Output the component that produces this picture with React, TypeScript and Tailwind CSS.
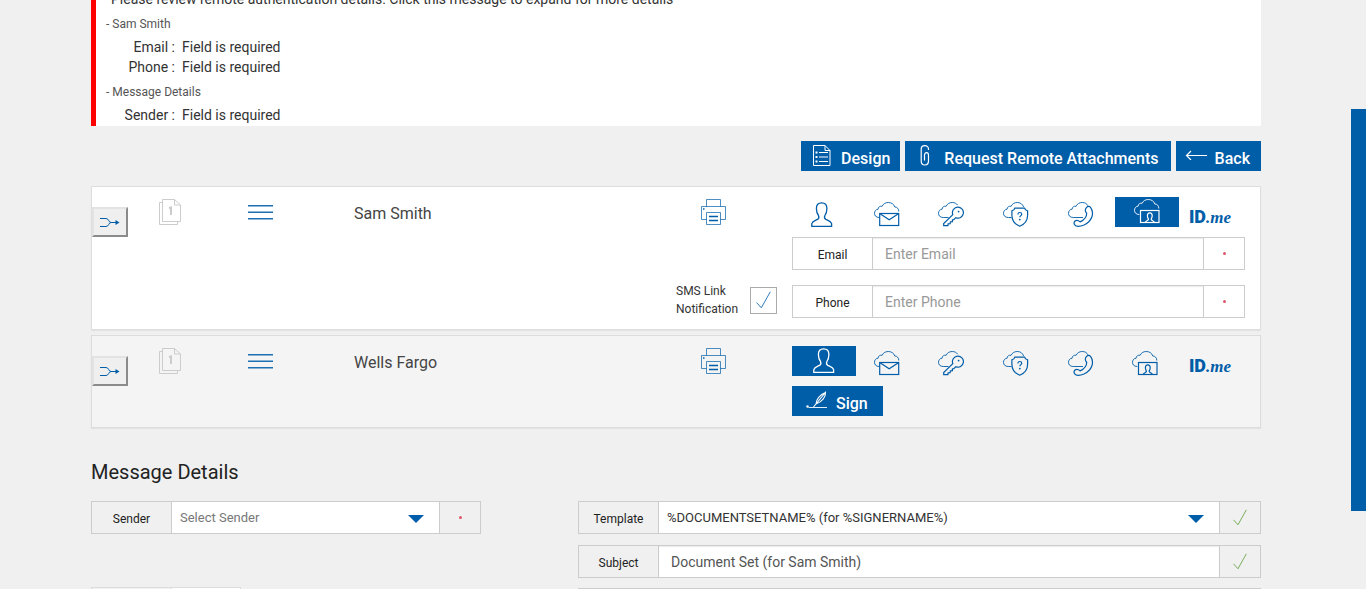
import React, { useState } from 'react';
import type { ReactNode } from 'react';

type Method = 'person' | 'mail' | 'key' | 'shield' | 'phone' | 'photo' | 'idme';

interface Signer {
  id: string;
  name: string;
  active: Method;
  remote: boolean;
}

const SIGNERS: Signer[] = [
  { id: 'sam', name: 'Sam Smith', active: 'photo', remote: true },
  { id: 'wells', name: 'Wells Fargo', active: 'person', remote: false },
];

const METHODS: { key: Method; label: string }[] = [
  { key: 'person', label: 'In person' },
  { key: 'mail', label: 'Remote email' },
  { key: 'key', label: 'Remote passcode' },
  { key: 'shield', label: 'Remote question' },
  { key: 'phone', label: 'Remote phone' },
  { key: 'photo', label: 'Remote photo ID' },
  { key: 'idme', label: 'ID.me' },
];

const ERRORS = [
  { group: 'Sam Smith', fields: ['Email', 'Phone'] },
  { group: 'Message Details', fields: ['Sender'] },
];

const CLOUD =
  'M5.3 15.5C2 15.5.5 13.6.5 11.3.5 9 2 7.3 4.1 7.2 4.2 5 6 3.8 8.1 4.3 9.2 1.8 11.5.5 14.3.5c3.2 0 5.7 1.8 6.5 4.5 2.4 0 4 1.8 4 4.5';

function MethodIcon({ method }: { method: Method }) {
  if (method === 'idme') {
    return (
      <span className="flex items-baseline leading-[26px] pt-[5px]">
        <span className="font-['Roboto',sans-serif] font-black text-[18px]">ID</span>
        <span className="font-['Liberation_Serif',serif] font-bold italic text-[17px]">.me</span>
      </span>
    );
  }
  if (method === 'person') {
    return (
      <svg className="w-[22px] h-[26px]" viewBox="0 0 22 26" fill="none" stroke="currentColor" strokeWidth="1.3">
        <path d="M10.6.8C7 .8 5.4 2.8 5.4 6.5c0 3 .6 5 2.1 7 .7 1.5.5 3-.9 3.9C4 18.7 1.5 19.2.8 21.6v2.8h19.8v-2.8c-.7-2.4-3.2-2.9-5.8-4.2-1.4-.9-1.6-2.4-.9-3.9 1.4-2 2-4 2-7C15.9 2.8 14.2.8 10.6.8Z" />
      </svg>
    );
  }
  return (
    <svg className="w-[26px] h-[26px]" viewBox="0 0 26 26" fill="none" stroke="currentColor" strokeWidth="1.2">
      {method === 'mail' && (
        <>
          <path d={CLOUD} strokeWidth="0.9" />
          <rect x="5.7" y="11.5" width="19" height="12" />
          <path d="m6 11.8 9.2 6 9.2-6" />
        </>
      )}
      {method === 'key' && (
        <>
          <path
            d="M10.5 15.5H5.3C2 15.5.5 13.6.5 11.3.5 9 2 7.3 4.1 7.2 4.2 5 6 3.8 8.1 4.3 9.2 1.8 11.5.5 14.3.5c2.2 0 4.2 1 5.4 2.6"
            strokeWidth="0.9"
          />
          <path d="M14.8 12.6a5.5 5.5 0 1 1 3 3.1l-2 2-1.4.3v1.7l-2 .2-.3 1.8-2 .2-.2 1.7H5.7v-2l9.1-9Z" />
          <circle cx="20.6" cy="9.6" r="0.9" fill="currentColor" stroke="none" />
        </>
      )}
      {method === 'shield' && (
        <>
          <path
            d="M8.5 15.5H5.3C2 15.5.5 13.6.5 11.3.5 9 2 7.3 4.1 7.2 4.2 5 6 3.8 8.1 4.3 9.2 1.8 11.5.5 14.3.5c3.2 0 5.2 1.6 6.3 4.5"
            strokeWidth="0.9"
          />
          <path d="M11.8 6.2h9.8c.3 1.4 1.4 2.4 3 2.6v4.4c0 5.2-3 9-7.9 11-4.8-2-7.8-5.8-7.8-11V8.8c1.5-.2 2.6-1.2 2.9-2.6Z" />
          <path d="M14.9 12.4c0-1.2.8-1.9 1.9-1.9s1.9.7 1.9 1.7c0 1.4-1.9 1.5-1.9 3.1" />
          <circle cx="16.8" cy="17.6" r="0.9" fill="currentColor" stroke="none" />
        </>
      )}
      {method === 'phone' && (
        <>
          <path
            d="M15 15.5H5.3C2 15.5.5 13.6.5 11.3.5 9 2 7.3 4.1 7.2 4.2 5 6 3.8 8.1 4.3 9.2 1.8 11.5.5 14.3.5c2.8 0 4.6 1.2 5.6 3.3"
            strokeWidth="0.9"
          />
          <path d="M18.6 5.3c1.2-1.2 2.9-1.2 3.9.1 4.3 5.6 1.4 14-6.5 17.6-4.2 1.8-8 1.8-9.5-.4-.9-1.5-.4-3.4 1.3-4 1.6-.5 3 .1 4.3 1.3 4.1-1.9 6.6-5.3 6.6-8.6-1.6-1.3-2-4-.1-6Z" />
        </>
      )}
      {method === 'photo' && (
        <>
          <path d={CLOUD} strokeWidth="0.9" />
          <rect x="6.5" y="11.5" width="18.5" height="12" />
          <path d="M11.2 23.5c.3-1.8 2.6-1.7 3.2-2.9.3-.8-1-1.7-1-3.9 0-1.9.9-2.9 2.4-2.9s2.4 1 2.4 2.9c0 2.2-1.3 3.1-1 3.9.6 1.2 2.9 1.1 3.2 2.9" />
        </>
      )}
    </svg>
  );
}

function PagesIcon() {
  return (
    <svg className="w-[22px] h-[26px] text-[#cccccc]" viewBox="0 0 22 26" fill="none" stroke="currentColor">
      <path d="M3.5 3.5h-3v22h18v-3M3.5.5h12l6 5.5v16.5h-18ZM15.5.5V6h6" />
      <path d="M10 9.300 12 8.500v7.500" strokeWidth="2" />
    </svg>
  );
}

function MenuIcon() {
  return (
    <svg className="w-[25px] h-[16px] text-[#1b70b4]" viewBox="0 0 25 16" stroke="currentColor" strokeWidth="1.6">
      <path d="M0 1.7h25M0 8.2h25M0 14.7h25" />
    </svg>
  );
}

function MergeIcon() {
  return (
    <svg className="w-[20px] h-[11px] text-[#005da8]" viewBox="0 0 20 11" fill="none" stroke="currentColor">
      <path d="M0 1.5h6c3 0 2.500 4 5 4h6M0 9.500h6c3 0 2.500-4 5-4" />
      <path d="m15.5 3 4 2.5-4 2.5Z" fill="currentColor" stroke="none" />
    </svg>
  );
}

function PrinterIcon() {
  return (
    <svg className="w-[26px] h-[26px] text-[#005da8]" viewBox="0 0 26 26" fill="none" stroke="currentColor" strokeWidth="0.7">
      <path d="M5.5 7.500v-7h14v7M5.500 20.500h-5v-13h24v13h-5M5.500 13.500h14v12h-14Z" />
      <path d="M8 17.5h9M8 21.5h9" strokeWidth="1.3" />
      <path d="M2 10h1.5" strokeWidth="1.3" />
    </svg>
  );
}

function CheckMark({ className }: { className: string }) {
  return (
    <svg className={className} viewBox="0 0 15 18" fill="none" stroke="currentColor">
      <path d="M.5 11.5 5.3 16.8 14.3.8" />
    </svg>
  );
}

function ActionButton({ icon, children, className }: { icon: ReactNode; children: ReactNode; className: string }) {
  return (
    <button type="button" className={`flex h-[30px] bg-[#005da8] text-white text-[16px] font-medium ${className}`}>
      {icon}
      <span className="leading-[20px] pt-2">{children}</span>
    </button>
  );
}

interface FieldProps {
  id: string;
  label: string;
  valid?: boolean;
  children: ReactNode;
}

function Field({ id, label, valid, children }: FieldProps) {
  return (
    <div className="flex h-[33px] border border-[#cccccc]">
      <label htmlFor={id} className="w-20 shrink-0 border-r border-[#cccccc] text-center text-[12px] leading-[18px] pt-2 text-[#222222]">
        {label}
      </label>
      {children}
      <span className="w-[41px] shrink-0 border-l border-[#cccccc] flex items-center justify-center">
        {valid ? (
          <CheckMark className="w-[14px] h-[17px] text-[#6fa84f]" />
        ) : (
          <span className="size-[3px] rounded-full bg-[#e0566a]"></span>
        )}
      </span>
    </div>
  );
}

function TextInput({ id, placeholder, defaultValue }: { id: string; placeholder?: string; defaultValue?: string }) {
  return (
    <input
      id={id}
      type="text"
      placeholder={placeholder}
      defaultValue={defaultValue}
      className="flex-1 min-w-0 bg-white px-3 pt-[2px] text-[14px] text-[#555555] placeholder:text-[#999999] shadow-[inset_0_1px_1px_rgba(0,0,0,0.08)] outline-none"
    />
  );
}

function SelectInput({ id, option, className }: { id: string; option: string; className: string }) {
  return (
    <div className="relative flex-1 min-w-0 flex">
      <select id={id} className={`flex-1 min-w-0 appearance-none bg-white px-2 text-[13px] outline-none ${className}`}>
        <option>{option}</option>
      </select>
      <svg className="absolute right-[15px] top-[13px] w-4 h-2 text-[#005da8] pointer-events-none" viewBox="0 0 16 8" fill="currentColor">
        <path d="M0 0h16L8 8Z" />
      </svg>
    </div>
  );
}

function SignerCard({ signer, className }: { signer: Signer; className: string }) {
  const [active, setActive] = useState<Method>(signer.active);
  const [smsLink, setSmsLink] = useState(true);

  return (
    <section
      className={`grid grid-cols-[67px_89px_106px_1fr_91px_453px] border border-[#dddddd] pt-[10px] pb-[11px] pr-[15px] shadow-[0_1px_1px_rgba(0,0,0,0.05)] ${className}`}
    >
      <div className="pt-[10px]">
        <button
          type="button"
          aria-label="Merge signers"
          className="w-9 h-[30px] flex items-center justify-center bg-[#efefef] border-2 border-t-[#e3e3e3] border-l-[#e3e3e3] border-r-[#8b8b8b] border-b-[#8b8b8b]"
        >
          <MergeIcon />
        </button>
      </div>
      <div className="pt-[2px]">
        <PagesIcon />
      </div>
      <div className="pt-[7px]">
        <MenuIcon />
      </div>
      <h3 className="text-[16px] leading-[20px] pt-[7px] text-[#444444]">{signer.name}</h3>
      <div className="pt-[2px]">
        <PrinterIcon />
      </div>
      <div className="grid grid-cols-[repeat(6,1fr)_65px] h-10 items-start">
        {METHODS.map((m) => (
          <button
            key={m.key}
            type="button"
            aria-label={m.label}
            onClick={() => setActive(m.key)}
            className={
              active === m.key
                ? 'w-16 h-[30px] flex items-center justify-center bg-[#005da8] text-white'
                : 'w-[60px] h-9 flex items-center justify-center text-[#005da8]'
            }
          >
            <MethodIcon method={m.key} />
          </button>
        ))}
      </div>

      {signer.remote ? (
        <>
          <div className="col-start-6">
            <Field id={`${signer.id}-email`} label="Email">
              <TextInput id={`${signer.id}-email`} placeholder="Enter Email" />
            </Field>
          </div>
          <label className="col-start-1 col-span-5 mt-3 flex items-center justify-end pr-[15px] gap-[10px]">
            <span className="w-16 text-[12px] leading-[18px] text-[#333333]">
              SMS Link
              <br />
              Notification
            </span>
            <span className="grid">
              <input
                type="checkbox"
                checked={smsLink}
                onChange={() => setSmsLink(!smsLink)}
                className="col-start-1 row-start-1 appearance-none size-[27px] bg-white border border-[#aaaaaa]"
              />
              {smsLink && (
                <CheckMark className="col-start-1 row-start-1 place-self-center w-[15px] h-[18px] text-[#2f7dbd] pointer-events-none" />
              )}
            </span>
          </label>
          <div className="col-start-6 mt-[15px]">
            <Field id={`${signer.id}-phone`} label="Phone">
              <TextInput id={`${signer.id}-phone`} placeholder="Enter Phone" />
            </Field>
          </div>
        </>
      ) : (
        <div className="col-start-6 flex">
          <ActionButton
            className="pl-[14px] pr-[15px] gap-[9px]"
            icon={
              <svg className="w-[21px] h-[18px] mt-[5px]" viewBox="0 0 21 18" fill="none" stroke="currentColor" strokeWidth="1.1">
                <path d="M2.5 16.5H21" strokeWidth="0.9" />
                <path d="M7.5 16 19.5 1.5c.3 4.500-3.500 9.500-9.500 11.500 0-4.500 4-9.500 9.500-11.500" />
                <circle cx="1.5" cy="15.5" r="1.2" fill="currentColor" stroke="none" />
              </svg>
            }
          >
            Sign
          </ActionButton>
        </div>
      )}
    </section>
  );
}

export default function App() {
  return (
    <div className="flex h-screen overflow-hidden bg-[#f0f0f0] font-['Roboto',sans-serif] text-[#222222]">
      <main className="flex-1 min-w-0 pl-[91px] pr-[90px]">
        {/* Validation message, scrolled partly out of view */}
        <div className="bg-white border-l-[5px] border-[#ff0000] overflow-hidden pl-[10px] pb-px text-[14px] leading-[20px] text-[#333333]">
          <p className="-mt-[11px] pl-[5px]">
            Please review remote authentication details. Click this message to expand for more details
          </p>
          {ERRORS.map((err) => (
            <div key={err.group} className="mt-[3px]">
              <p className="text-[12px] leading-[24px] text-[#555555]">- {err.group}</p>
              <dl className="pt-px">
                {err.fields.map((field) => (
                  <div key={field} className="flex gap-[7px]">
                    <dt className="w-[69px] text-right">{field} :</dt>
                    <dd>Field is required</dd>
                  </div>
                ))}
              </dl>
            </div>
          ))}
        </div>

        {/* Toolbar */}
        <div className="flex justify-end gap-[5px] my-[15px]">
          <ActionButton
            className="pl-3 pr-[10px] gap-[10px]"
            icon={
              <svg className="w-[18px] h-[21px] mt-1" viewBox="0 0 18 21" fill="none" stroke="currentColor">
                <path d="M.5.5h11.500l5 5v15H.5ZM12 .5v5h5" />
                <path d="M6 7.5h9M6 12h9M6 16.5h9" />
                <path d="M2.5 7.5h2M2.5 12h2M2.5 16.5h2" strokeWidth="2" />
              </svg>
            }
          >
            Design
          </ActionButton>
          <ActionButton
            className="pl-[15px] pr-3 gap-[14px]"
            icon={
              <svg className="w-[10px] h-[21px] mt-1" viewBox="0 0 10 21" fill="none" stroke="currentColor" strokeWidth="1.2">
                <path d="M8.5 5V4C8.5 2 7 .7 4.8.7S1.2 2 1.2 4v12c0 2.5 1.5 4 3.6 4s3.7-1.5 3.7-4v-6c0-1.5-.8-2.3-2-2.3s-2 .8-2 2.3v5.5" />
              </svg>
            }
          >
            Request Remote Attachments
          </ActionButton>
          <ActionButton
            className="pl-[9px] pr-[11px] gap-2"
            icon={
              <svg className="w-[22px] h-[10px] mt-[9px]" viewBox="0 0 22 10" fill="none" stroke="currentColor" strokeWidth="1.2">
                <path d="M22 5.5H1.5M6 1 1.5 5.500 6 10" />
              </svg>
            }
          >
            Back
          </ActionButton>
        </div>

        {/* Signers */}
        <div className="flex flex-col gap-[5px]">
          {SIGNERS.map((signer) => (
            <SignerCard key={signer.id} signer={signer} className={signer.remote ? 'bg-white' : 'bg-[#f4f4f4]'} />
          ))}
        </div>

        {/* Message details */}
        <h2 className="mt-[30px] mb-[15px] text-[20px] leading-[28px]">Message Details</h2>
        <div className="flex gap-[97px]">
          <div className="w-1/3">
            <Field id="sender" label="Sender">
              <SelectInput id="sender" option="Select Sender" className="text-[#777777]" />
            </Field>
            <div className="mt-[53px] w-[150px] h-[33px] border border-[#dddddd] flex">
              <div className="w-20 border-r border-[#dddddd]"></div>
              <div className="flex-1 bg-white"></div>
            </div>
          </div>
          <div className="flex-1 min-w-0">
            <Field id="template" label="Template" valid>
              <SelectInput id="template" option="%DOCUMENTSETNAME% (for %SIGNERNAME%)" className="text-[#333333]" />
            </Field>
            <div className="mt-[11px] mb-[10px]">
              <Field id="subject" label="Subject" valid>
                <TextInput id="subject" defaultValue="Document Set (for Sam Smith)" />
              </Field>
            </div>
            <div className="h-[33px] border border-[#cccccc]"></div>
          </div>
        </div>
      </main>
      <aside className="w-[15px] h-[402px] shrink-0 mt-[109px] bg-[#005da8]"></aside>
    </div>
  );
}
